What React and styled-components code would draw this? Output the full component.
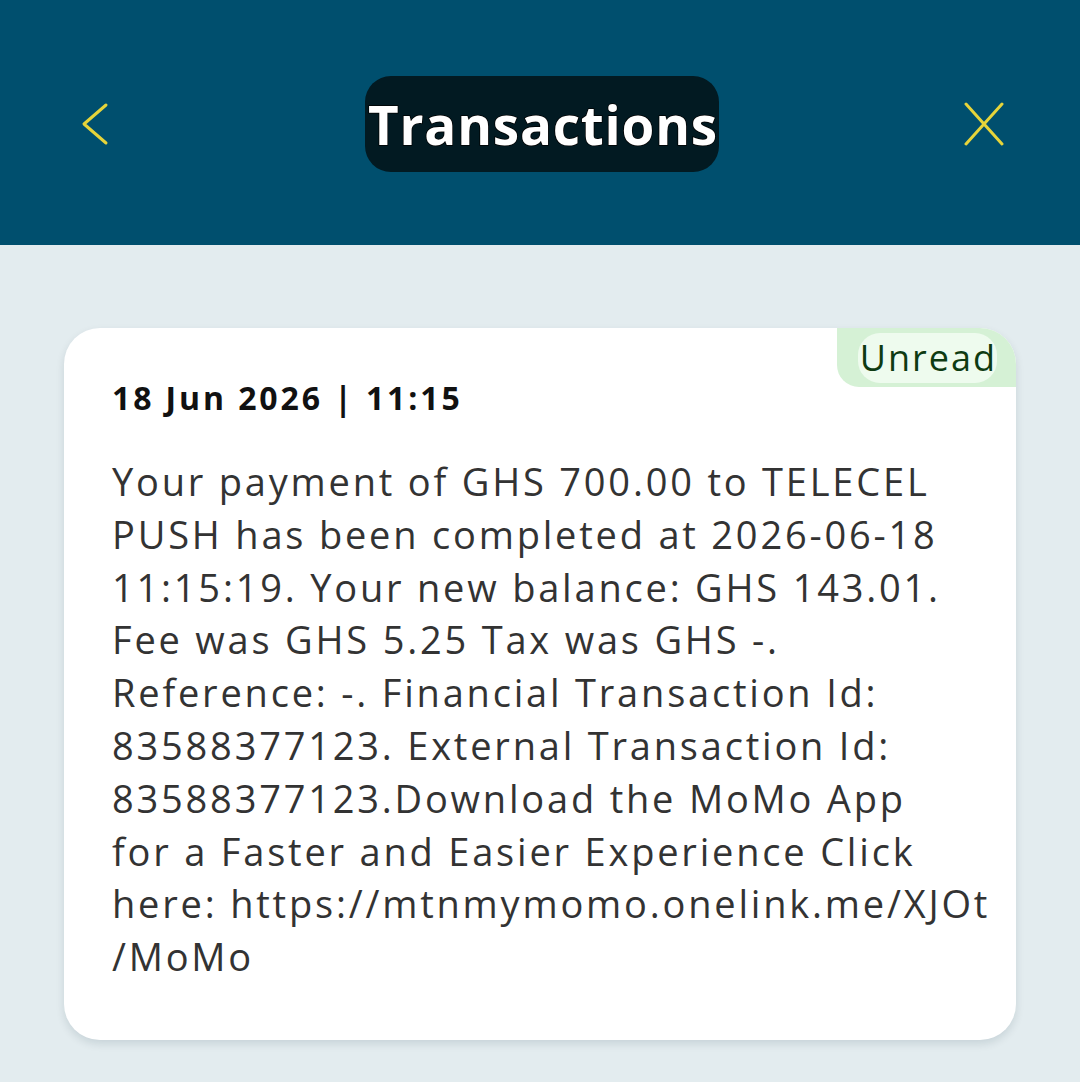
import React from "react";
import styled, { createGlobalStyle } from "styled-components";

const Global = createGlobalStyle`
  html, body { margin: 0; padding: 0; background: #e3ecef; }
  body { font-family: "Open Sans", "Noto Sans", sans-serif; }
`;

const Page = styled.div`
  width: 1080px;
  height: 1082px;
  background: #e3ecef;
  display: flex;
  flex-direction: column;
  overflow: hidden;
`;

const Header = styled.header`
  height: 245px;
  flex: none;
  background: #004f6e;
  display: grid;
  grid-template-columns: 1fr auto 1fr;
  align-items: start;
  padding: 76px 76px 0 80px;
  box-sizing: border-box;
`;

const IconButton = styled.button`
  background: none;
  border: none;
  padding: 0;
  width: 60px;
  height: 96px;
  display: flex;
  align-items: center;
  justify-content: ${(p) => (p.$end ? "flex-end" : "flex-start")};
  justify-self: ${(p) => (p.$end ? "end" : "start")};
  color: #e6d43a;
`;

const TitlePill = styled.h1`
  margin: 0;
  height: 96px;
  padding: 0 1px 0 3px;
  box-sizing: border-box;
  display: flex;
  align-items: center;
  background: #021a22;
  border-radius: 26px;
  color: #fff;
  font-family: "Open Sans", sans-serif;
  font-weight: 700;
  font-size: 53px;
  letter-spacing: 0.8px;
  -webkit-text-stroke: 1.5px #000;
  paint-order: stroke fill;
`;

const Content = styled.main`
  padding: 83px 64px 0 64px;
`;

const Card = styled.article`
  position: relative;
  background: #fff;
  border-radius: 36px;
  box-shadow: 0 4px 8px rgba(0, 40, 60, 0.12);
  padding: 48px 30px 0 48px;
  height: 712px;
  box-sizing: border-box;
`;

const Badge = styled.div`
  position: absolute;
  top: 0;
  right: 0;
  background: #d5f1d5;
  border-radius: 0 36px 0 22px;
  padding: 5px 19px 4px 21px;
`;

const BadgeInner = styled.span`
  display: block;
  background: #eefbee;
  border-radius: 22px;
  padding: 0 0 0 2px;
  height: 50px;
  line-height: 50px;
  color: #0e3b12;
  font-family: "Open Sans", sans-serif;
  font-size: 36px;
  letter-spacing: 2px;
`;

const DateLine = styled.div`
  font-family: "Open Sans", sans-serif;
  font-weight: 700;
  font-size: 32px;
  color: #111;
  line-height: 44px;
  letter-spacing: 2.9px;
`;

const Message = styled.p`
  margin: 35px 0 0 0;
  font-family: "Open Sans", sans-serif;
  font-size: 38px;
  line-height: 52.8px;
  color: #333;
  letter-spacing: 2.8px;
  white-space: nowrap;
`;

const Chevron = () => (
  <svg width="30" height="44" viewBox="0 0 30 44" fill="none" stroke="currentColor" strokeWidth="3" strokeLinecap="round" strokeLinejoin="round">
    <path d="M26 3 L4 22 L26 41" />
  </svg>
);

const Close = () => (
  <svg width="40" height="44" viewBox="0 0 40 44" fill="none" stroke="currentColor" strokeWidth="3" strokeLinecap="round">
    <path d="M2 2 L38 42 M38 2 L2 42" />
  </svg>
);

const lines = [
  "Your payment of GHS 700.00 to TELECEL",
  "PUSH has been completed at 2026-06-18",
  "11:15:19. Your new balance: GHS 143.01.",
  "Fee was GHS 5.25 Tax was GHS -.",
  "Reference: -. Financial Transaction Id:",
  "83588377123. External Transaction Id:",
  "83588377123.Download the MoMo App",
  "for a Faster and Easier Experience Click",
  "here: https://mtnmymomo.onelink.me/XJOt",
  "/MoMo",
];

export default function App() {
  return (
    <>
      <Global />
      <Page>
        <Header>
          <IconButton aria-label="Back">
            <Chevron />
          </IconButton>
          <TitlePill>Transactions</TitlePill>
          <IconButton $end aria-label="Close">
            <Close />
          </IconButton>
        </Header>
        <Content>
          <Card>
            <Badge>
              <BadgeInner>Unread</BadgeInner>
            </Badge>
            <DateLine>18 Jun 2026 | 11:15</DateLine>
            <Message>
              {lines.map((l, i) => (
                <React.Fragment key={i}>
                  {l}
                  {i < lines.length - 1 && <br />}
                </React.Fragment>
              ))}
            </Message>
          </Card>
        </Content>
      </Page>
    </>
  );
}
